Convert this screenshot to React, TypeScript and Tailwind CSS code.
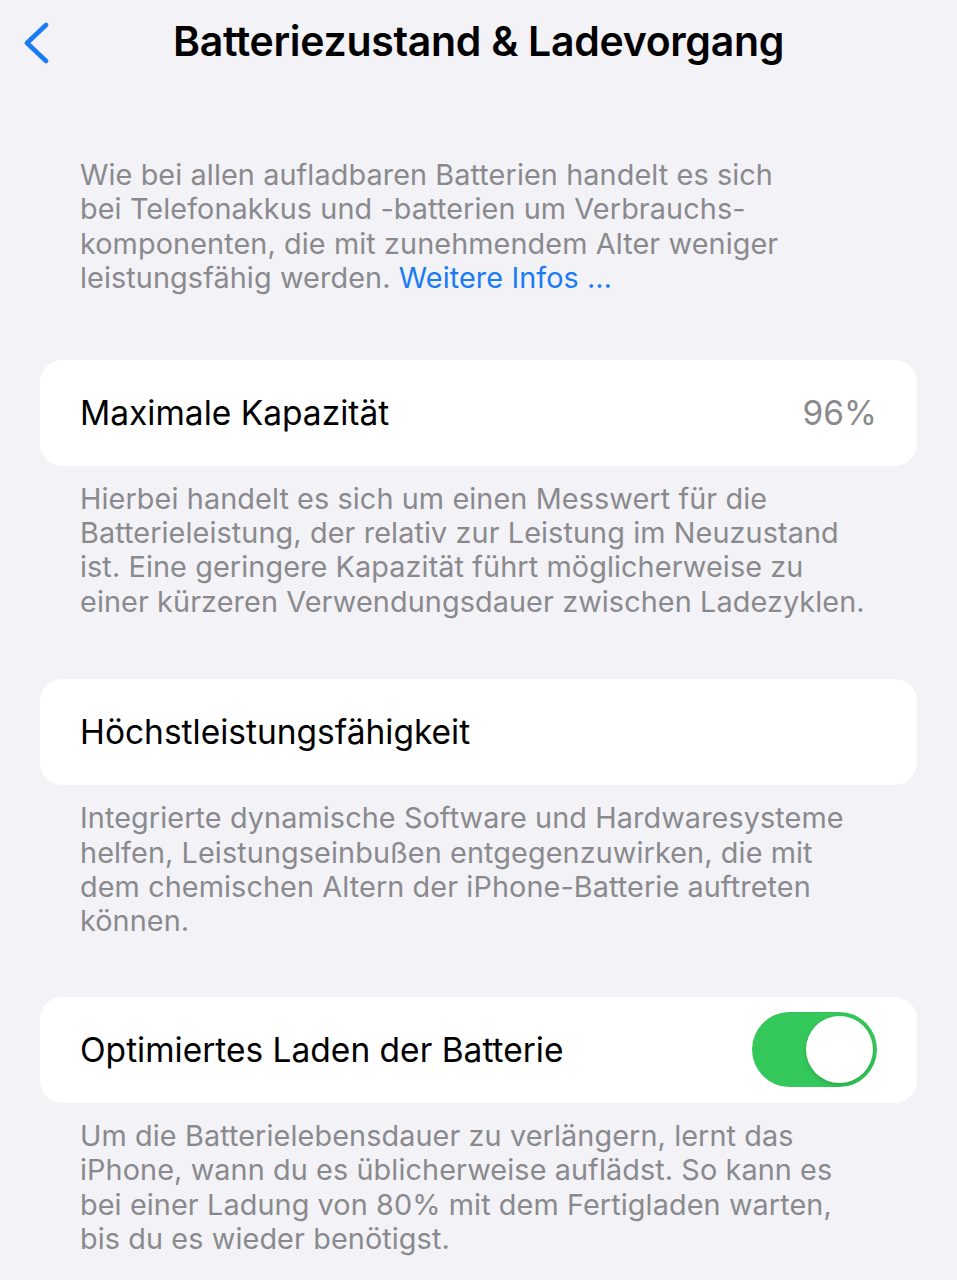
const font = { fontFamily: "Inter, 'Noto Sans', sans-serif" };

const Footer = ({ lines }: { lines: React.ReactNode[] }) => (
  <p className="px-[80px] pt-[16px] text-[28.8px] leading-[34.4px] tracking-[0.1px] text-[#8a8a8e]">
    {lines.map((l, i) => (
      <span key={i} className="block whitespace-nowrap">
        {l}
      </span>
    ))}
  </p>
);

const Card = ({ children }: { children: React.ReactNode }) => (
  <div className="mx-[40px] flex h-[106px] items-center justify-between rounded-[22px] bg-white pl-[40px] pr-[40px] text-[33.5px] text-black">
    {children}
  </div>
);

export default function App() {
  return (
    <div className="min-h-[1280px] w-[957px] bg-[#f2f2f7]" style={font}>
      <header className="relative flex h-[84px] items-center justify-center">
        <svg
          className="absolute left-[20px] top-[22px]"
          width="32"
          height="42"
          viewBox="0 0 32 42"
          fill="none"
        >
          <path
            d="M26 3 L7 21 L26 39"
            stroke="#1a7cf5"
            strokeWidth="4.6"
            strokeLinecap="round"
            strokeLinejoin="round"
          />
        </svg>
        <h1 className="text-[41px] font-semibold tracking-[-0.3px] text-black">
          Batteriezustand &amp; Ladevorgang
        </h1>
      </header>

      <div className="pt-[58px]">
        <Footer
          lines={[
            "Wie bei allen aufladbaren Batterien handelt es sich",
            "bei Telefonakkus und -batterien um Verbrauchs-",
            "komponenten, die mit zunehmendem Alter weniger",
            <>
              leistungsfähig werden. <span className="text-[#1a7cf5]">Weitere Infos …</span>
            </>,
          ]}
        />
      </div>

      <div className="mt-[64px]">
        <Card>
          <span>Maximale Kapazität</span>
          <span className="text-[#8a8a8e]">96%</span>
        </Card>
        <Footer
          lines={[
            "Hierbei handelt es sich um einen Messwert für die",
            "Batterieleistung, der relativ zur Leistung im Neuzustand",
            "ist. Eine geringere Kapazität führt möglicherweise zu",
            "einer kürzeren Verwendungsdauer zwischen Ladezyklen.",
          ]}
        />
      </div>

      <div className="mt-[60px]">
        <Card>
          <span>Höchstleistungsfähigkeit</span>
        </Card>
        <Footer
          lines={[
            "Integrierte dynamische Software und Hardwaresysteme",
            "helfen, Leistungseinbußen entgegenzuwirken, die mit",
            "dem chemischen Altern der iPhone-Batterie auftreten",
            "können.",
          ]}
        />
      </div>

      <div className="mt-[58px]">
        <Card>
          <span>Optimiertes Laden der Batterie</span>
          <div className="flex h-[75px] w-[125px] items-center justify-end rounded-full bg-[#34c759] p-[4px]">
            <div className="h-[67px] w-[67px] rounded-full bg-white shadow-[0_2px_4px_rgba(0,0,0,0.15)]" />
          </div>
        </Card>
        <Footer
          lines={[
            "Um die Batterielebensdauer zu verlängern, lernt das",
            "iPhone, wann du es üblicherweise auflädst. So kann es",
            "bei einer Ladung von 80% mit dem Fertigladen warten,",
            "bis du es wieder benötigst.",
          ]}
        />
      </div>
    </div>
  );
}
